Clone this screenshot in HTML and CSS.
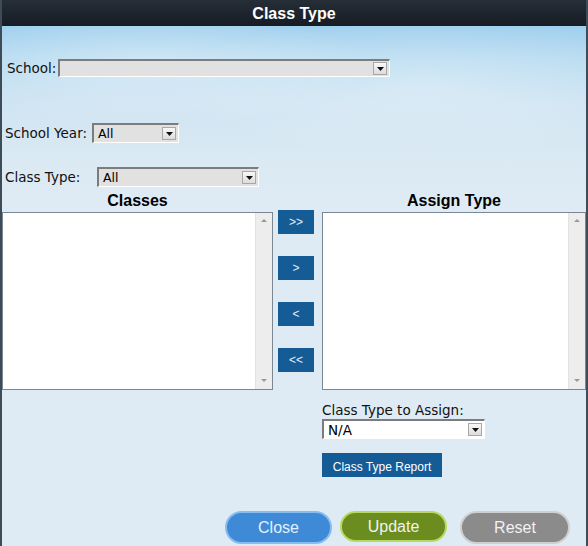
FILE: index.html
```html
<!DOCTYPE html>
<html>
<head>
<meta charset="utf-8">
<link rel="stylesheet" href="styles.css">
</head>
<body>
<div class="window">
  <div class="titlebar">Class Type</div>
  <div class="body">
    <div class="row row-school">
      <span class="label">School:</span>
      <div class="select sel-school"><span class="val"></span><span class="arrow"><svg width="7" height="4" viewBox="0 0 7 4"><path d="M0 0H7L3.5 4Z" fill="#111"/></svg></span></div>
    </div>
    <div class="row row-year">
      <span class="label">School Year:</span>
      <div class="select sel-year"><span class="val">All</span><span class="arrow"><svg width="7" height="4" viewBox="0 0 7 4"><path d="M0 0H7L3.5 4Z" fill="#111"/></svg></span></div>
    </div>
    <div class="row row-type">
      <span class="label">Class Type:</span>
      <div class="select sel-type"><span class="val">All</span><span class="arrow"><svg width="7" height="4" viewBox="0 0 7 4"><path d="M0 0H7L3.5 4Z" fill="#111"/></svg></span></div>
    </div>
    <div class="transfer">
      <div class="col col-left">
        <div class="heading">Classes</div>
        <div class="listbox"><div class="scroll"><span class="up"></span><span class="down"></span></div></div>
      </div>
      <div class="col col-mid">
        <button class="move">&gt;&gt;</button>
        <button class="move">&gt;</button>
        <button class="move">&lt;</button>
        <button class="move">&lt;&lt;</button>
      </div>
      <div class="col col-right">
        <div class="heading">Assign Type</div>
        <div class="listbox"><div class="scroll"><span class="up"></span><span class="down"></span></div></div>
        <div class="assign-label">Class Type to Assign:</div>
        <div class="select sel-assign"><span class="val">N/A</span><span class="arrow"><svg width="7" height="4" viewBox="0 0 7 4"><path d="M0 0H7L3.5 4Z" fill="#111"/></svg></span></div>
        <button class="report">Class Type Report</button>
      </div>
    </div>
    <div class="actions">
      <button class="pill close">Close</button>
      <button class="pill update">Update</button>
      <button class="pill reset">Reset</button>
    </div>
  </div>
</div>
</body>
</html>
```
FILE: styles.css
```css
html, body {
  margin: 0;
  padding: 0;
}
body {
  width: 588px;
  height: 546px;
  overflow: hidden;
  font-family: "DejaVu Sans", sans-serif;
}
.window {
  width: 588px;
  height: 546px;
  box-sizing: border-box;
  border-left: 2px solid #3e4c58;
  border-right: 2px solid #3e4c58;
  display: flex;
  flex-direction: column;
  background: #dfebf4;
}
.titlebar {
  height: 26px;
  line-height: 27px;
  text-align: center;
  color: #fff;
  font-family: "Liberation Sans", Arial, sans-serif;
  font-weight: bold;
  font-size: 16px;
  background: linear-gradient(#262e38, #1c232b 60%, #161c22);
  flex: none;
}
.body {
  flex: 1;
  background:
    radial-gradient(ellipse 220px 60px at 150px 40px, rgba(255,255,255,0.35), rgba(255,255,255,0)),
    radial-gradient(ellipse 260px 70px at 420px 60px, rgba(255,255,255,0.3), rgba(255,255,255,0)),
    linear-gradient(#9fcfee 0px, #b5daf0 30px, #cfe4f2 80px, #dae9f3 130px, #dfebf4 180px, #dfebf4);
  position: relative;
}
.row {
  display: flex;
  align-items: center;
  font-size: 13.5px;
  color: #111;
}
.label {
  line-height: 16px;
}
.row-school { margin-top: 33px; padding-left: 5px; }
.row-school .label { width: 51px; }
.row-year { margin-top: 46px; padding-left: 3px; }
.row-year .label { width: 87px; }
.row-type { margin-top: 24px; padding-left: 3px; }
.row-type .label { width: 92px; }

.select {
  box-sizing: border-box;
  display: flex;
  align-items: center;
  background: #e1e1e1;
  border-top: 2px solid #7c7c7c;
  border-left: 2px solid #7c7c7c;
  border-bottom: 1px solid #fff;
  border-right: 1px solid #fff;
  font-size: 12.5px;
  color: #000;
}
.select .val {
  flex: 1;
  padding-left: 4px;
  line-height: 14px;
}
.select .arrow {
  width: 14px;
  height: 13px;
  margin-right: 2px;
  box-sizing: border-box;
  border: 1px solid #a8a8a8;
  background: linear-gradient(#f8f8f8, #dcdcdc);
  display: flex;
  align-items: center;
  justify-content: center;
}
.sel-school { width: 332px; height: 18px; }
.sel-year { width: 87px; height: 20px; }
.sel-type { width: 162px; height: 20px; }
.sel-assign { width: 163px; height: 20px; font-size: 13.5px; background: #fff; }

.transfer {
  display: flex;
  margin-top: 5px;
}
.col-left { width: 271px; }
.col-mid {
  width: 36px;
  margin-left: 5px;
  padding-top: 18px;
  display: flex;
  flex-direction: column;
  gap: 22px;
}
.col-right { width: 264px; margin-left: 8px; }
.heading {
  text-align: center;
  font-family: "Liberation Sans", Arial, sans-serif;
  font-weight: bold;
  font-size: 16px;
  line-height: 18px;
  height: 18px;
  color: #000;
}
.listbox {
  margin-top: 2px;
  height: 178px;
  box-sizing: border-box;
  border: 1px solid #7a8794;
  background: #fff;
  display: flex;
  justify-content: flex-end;
}
.scroll {
  width: 16px;
  background: #ededed;
  border-left: 1px solid #e2e2e2;
  position: relative;
}
.scroll .up, .scroll .down {
  position: absolute;
  left: 5px;
  width: 0;
  height: 0;
  border-left: 3px solid transparent;
  border-right: 3px solid transparent;
}
.scroll .up { top: 6px; border-bottom: 3px solid #9a9a9a; }
.scroll .down { bottom: 7px; border-top: 3px solid #9a9a9a; }

.move {
  width: 36px;
  height: 24px;
  border: none;
  padding: 0;
  background: #155c97;
  color: #e6eef6;
  font-family: "Liberation Sans", Arial, sans-serif;
  font-size: 12px;
}
.assign-label {
  margin-top: 11px;
  font-size: 13.5px;
  line-height: 18px;
  color: #111;
}
.report {
  display: block;
  margin-top: 14px;
  width: 120px;
  height: 24px;
  border: none;
  padding: 0;
  background: #155c97;
  color: #fff;
  font-family: "Liberation Sans", Arial, sans-serif;
  font-size: 12px;
  line-height: 28px;
}
.actions {
  position: absolute;
  left: 0;
  right: 0;
  top: 485px;
  display: flex;
  padding-left: 223px;
  align-items: flex-start;
}
.pill {
  height: 33px;
  border-radius: 17px;
  font-family: "Liberation Sans", Arial, sans-serif;
  font-size: 16px;
  padding: 0;
  box-sizing: border-box;
}
.close {
  width: 107px;
  background: #3f8ad6;
  border: 2px solid #86bdf0;
  color: #e4f1ff;
}
.update {
  width: 107px;
  height: 31px;
  margin-left: 8px;
  background: #6b8c1f;
  border: 2px solid #b9d862;
  color: #eef3ee;
  line-height: 24px;
}
.reset {
  width: 110px;
  margin-left: 13px;
  background: #8b8b8b;
  border: 2px solid #cfcfcf;
  color: #f2f2f2;
}
```
